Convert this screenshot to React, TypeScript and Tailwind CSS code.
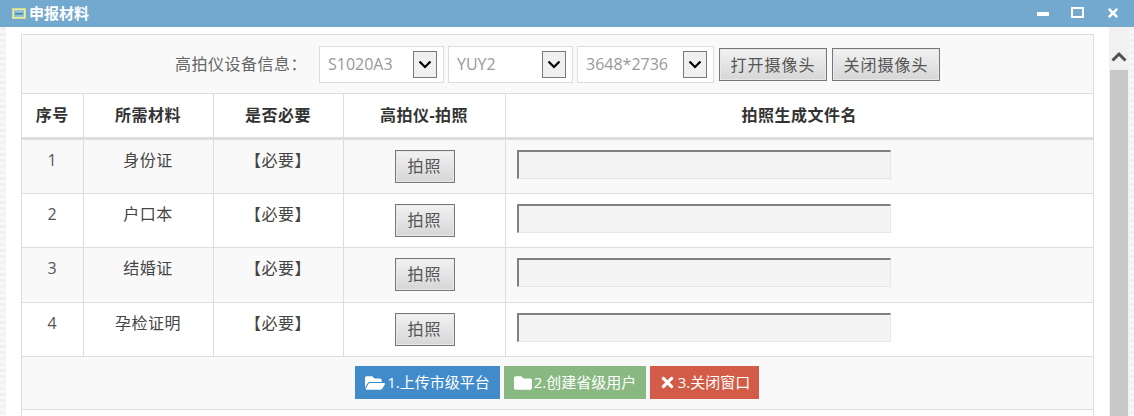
import React from "react";
import { FaFolderOpen, FaFolder, FaTimes } from "react-icons/fa";

const FONT = "font-['Open_Sans','Noto_Sans_CJK_SC',sans-serif]";

const rows = [
  { no: 1, name: "身份证" },
  { no: 2, name: "户口本" },
  { no: 3, name: "结婚证" },
  { no: 4, name: "孕检证明" },
];

function FakeSelect({ value, width }: { value: string; width: string }) {
  return (
    <div className={`${width} h-[37px] bg-white border border-[#dddddd] flex items-center justify-between pl-2 pr-[6px] text-[16px] text-[#999999]`}>
      <span>{value}</span>
      <span className="w-[24px] h-[27px] bg-[#f0f0f0] border border-[#7a7a7a] flex items-center justify-center">
        <svg width="14" height="9" viewBox="0 0 14 9" fill="none">
          <path d="M1.5 1.5 L7 7 L12.5 1.5" stroke="#000" strokeWidth="2.2" />
        </svg>
      </span>
    </div>
  );
}

function GrayButton({ children, width, height }: { children: React.ReactNode; width: string; height: string }) {
  return (
    <button className={`${width} ${height} bg-gradient-to-b from-[#f2f2f2] to-[#d6d6d6] border border-[#777777] shadow-[inset_0_0_0_1px_#e8e8e8] text-[16px] tracking-[1px] text-[#555555] flex items-center justify-center`}>
      {children}
    </button>
  );
}

function ActionButton({ icon, label, color, width }: { icon: React.ReactNode; label: string; color: string; width: string }) {
  return (
    <button className={`${width} ${color} h-[33px] text-white text-[15px] flex items-center justify-center gap-[2px]`}>
      {icon}
      <span>{label}</span>
    </button>
  );
}

export default function App() {
  return (
    <div className={`${FONT} w-[1134px] h-[416px] overflow-hidden bg-white flex flex-col`}>
      {/* Title bar */}
      <div className="h-[27px] bg-[#74a9cf] flex items-center justify-between pl-[12px]">
        <div className="flex items-center gap-[3px]">
          <svg width="14" height="11" viewBox="0 0 14 11">
            <rect x="0.5" y="0.5" width="13" height="10" fill="#e8eeb0" stroke="#d6dc8c" />
            <rect x="2" y="2" width="10" height="7" fill="#8fc2d8" />
            <rect x="3" y="5" width="8" height="1.5" fill="#4f7f9c" />
          </svg>
          <span className="text-[15px] font-bold text-white">申报材料</span>
        </div>
        <div className="flex items-center">
          <span className="w-[12px] h-[4px] bg-white mr-[22px]" />
          <span className="w-[13px] h-[11px] border-2 border-white mr-[22px] mb-[2px]" />
          <FaTimes className="text-white text-[14px] mr-[14px] mb-[2px]" />
        </div>
      </div>

      <div className="flex-1 flex min-h-0">
        {/* left edge of the page behind the dialog */}
        <div className="w-[6px] bg-[repeating-linear-gradient(180deg,#f1f1f1_0px,#f1f1f1_3px,#f8f8f8_3px,#f8f8f8_6px)]" />

        <div className="w-[1103px] pl-[15px] pt-[7px] bg-white">
          <div className="w-[1073px] border border-[#dddddd] border-b-0 h-[400px]">
            {/* Device toolbar */}
            <div className="h-[59px] bg-[#f9f9f9] flex items-center justify-center border-b border-[#dddddd]">
              <span className="w-[144px] text-[16px] tracking-[0.5px] text-[#666666]">高拍仪设备信息：</span>
              <div className="flex items-center gap-[4px]">
                <FakeSelect value="S1020A3" width="w-[125px]" />
                <FakeSelect value="YUY2" width="w-[125px]" />
                <FakeSelect value="3648*2736" width="w-[137px]" />
                <div className="flex gap-[5px] ml-[1px] mt-[1px]">
                  <GrayButton width="w-[108px]" height="h-[33px]">打开摄像头</GrayButton>
                  <GrayButton width="w-[108px]" height="h-[33px]">关闭摄像头</GrayButton>
                </div>
              </div>
            </div>

            <table className="w-full table-fixed border-collapse text-[16px] tracking-[0.5px] text-[#444444]">
              <colgroup>
                <col className="w-[61px]" />
                <col className="w-[130px]" />
                <col className="w-[130px]" />
                <col className="w-[162px]" />
                <col />
              </colgroup>
              <thead>
                <tr className="h-[44px] bg-white border-b-[3px] border-[#dddddd]">
                  <th className="font-bold text-[#333333] border-r border-[#dddddd]">序号</th>
                  <th className="font-bold text-[#333333] border-r border-[#dddddd]">所需材料</th>
                  <th className="font-bold text-[#333333] border-r border-[#dddddd]">是否必要</th>
                  <th className="font-bold text-[#333333] border-r border-[#dddddd]">高拍仪-拍照</th>
                  <th className="font-bold text-[#333333]">拍照生成文件名</th>
                </tr>
              </thead>
              <tbody>
                {rows.map((r, i) => (
                  <tr key={r.no} className={`border-b border-[#dddddd] ${i % 2 === 0 ? "h-[55px] bg-[#f9f9f9]" : "h-[54px] bg-white"}`}>
                    <td className="align-top text-center pt-[8px] text-[#555555] border-r border-[#dddddd]">{r.no}</td>
                    <td className="align-top text-center pt-[8px] border-r border-[#dddddd]">{r.name}</td>
                    <td className="align-top text-center pt-[8px] border-r border-[#dddddd]">【必要】</td>
                    <td className="align-top pt-[10px] border-r border-[#dddddd]">
                      <div className="flex justify-center pl-[1px]">
                        <GrayButton width="w-[60px]" height="h-[33px]">拍照</GrayButton>
                      </div>
                    </td>
                    <td className="align-top pt-[10px] pl-[11px]">
                      <input
                        readOnly
                        className="block w-[374px] h-[29px] bg-[#f4f4f4] border-2 border-t-[#808080] border-l-[#808080] border-r-[#e6e6e6] border-b-[#e6e6e6] border-r-1 border-b-1"
                      />
                    </td>
                  </tr>
                ))}
              </tbody>
            </table>

            {/* Actions */}
            <div className="h-[53px] bg-[#f9f9f9] border-b border-[#dddddd] flex items-center justify-center gap-[4px] pr-[1px]">
              <ActionButton icon={<FaFolderOpen className="text-[20px]" />} label="1.上传市级平台" color="bg-[#428bca]" width="w-[145px]" />
              <ActionButton icon={<FaFolder className="text-[18px]" />} label="2.创建省级用户" color="bg-[#8ab883]" width="w-[142px]" />
              <ActionButton icon={<FaTimes className="text-[17px]" />} label="3.关闭窗口" color="bg-[#d25c47]" width="w-[109px]" />
            </div>
          </div>
        </div>

        {/* Scrollbar */}
        <div className="w-[20px] bg-[#f1f1f1] flex flex-col items-center px-[1px]">
          <div className="h-[16px] mt-[21px] flex items-center justify-center">
            <svg width="16" height="11" viewBox="0 0 16 11" fill="none">
              <path d="M1.5 9.5 L8 3 L14.5 9.5" stroke="#505050" strokeWidth="3" />
            </svg>
          </div>
          <div className="w-[18px] flex-1 mt-[6px] bg-[#c8c8c8]" />
        </div>
        <div className="flex-1 bg-[repeating-linear-gradient(180deg,#f1f1f1_0px,#f1f1f1_3px,#f8f8f8_3px,#f8f8f8_6px)]" />
      </div>
    </div>
  );
}
